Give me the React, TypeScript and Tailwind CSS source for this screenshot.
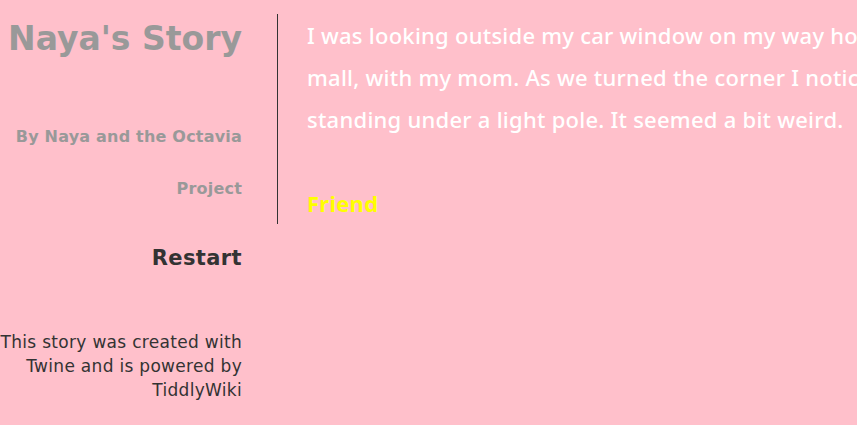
export default function App() {
  return (
    <div className="flex h-screen w-full overflow-hidden bg-[#ffc0cb]">
      <aside className="w-[242px] shrink-0 text-right font-['DejaVu_Sans',sans-serif]">
        <h1 className="mt-[19px] whitespace-nowrap text-[33px] font-bold leading-[40px] text-[#999999]">
          Naya's Story
        </h1>
        <p className="mt-[52px] text-[16px] font-bold leading-[52px] tracking-[0.2px] text-[#999999]">
          By Naya and the Octavia Project
        </p>
        <nav className="mt-[29px]">
          <a className="text-[21px] font-bold leading-[28px] tracking-[0.4px] text-[#333333]">
            Restart
          </a>
        </nav>
        <p className="mt-[58px] text-[17px] leading-[24px] tracking-[0.3px] text-[#333333]">
          This story was created with
          <br />
          Twine and is powered by
          <br />
          TiddlyWiki
        </p>
      </aside>

      <main className="ml-[35px] mt-[14px] self-start whitespace-nowrap border-l border-[#333333] pl-[29px] font-['Noto_Sans',sans-serif] text-[22px] font-medium leading-[42px] tracking-[0.25px] text-white">
        <p>
          I was looking outside my car window on my way home from the
          <br />
          mall, with my mom. As we turned the corner I noticed a girl
          <br />
          standing under a light pole. It seemed a bit weird.
        </p>
        <br />
        <a className="font-bold text-[#ffff00]">Friend</a>
      </main>
    </div>
  );
}
